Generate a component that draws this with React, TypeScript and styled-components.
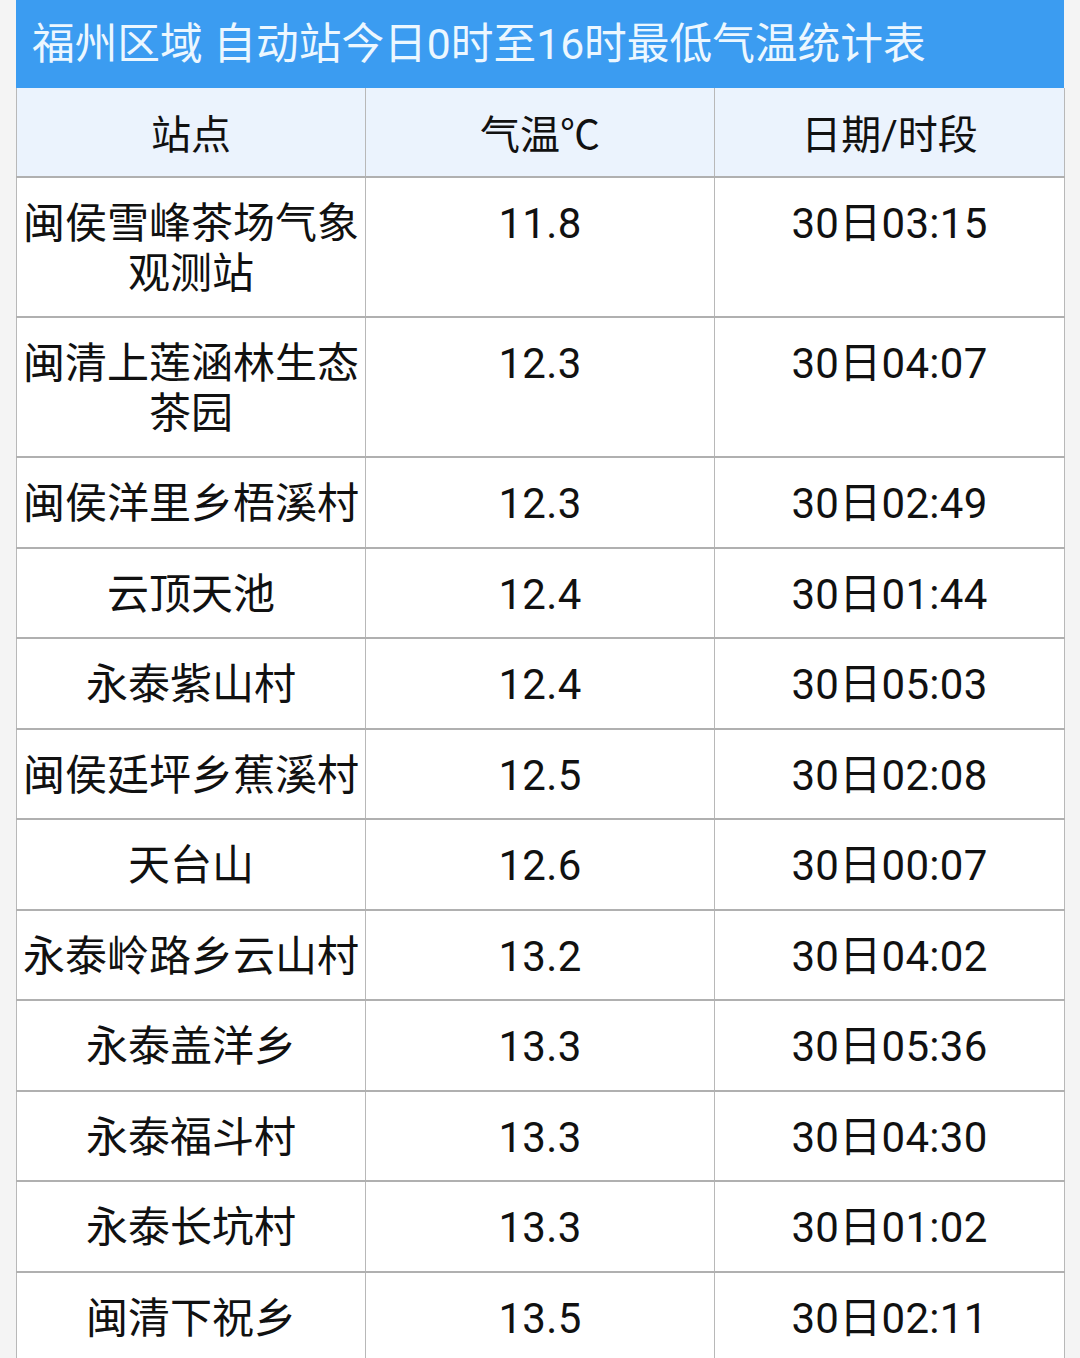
import styled, { createGlobalStyle } from 'styled-components'

const GlobalStyle = createGlobalStyle`
  html, body {
    margin: 0;
    padding: 0;
    background: #f4f4f4;
  }
  body {
    font-family: Roboto, "Noto Sans CJK SC", "Noto Sans", sans-serif;
  }
`

const Page = styled.div`
  width: 1080px;
  padding: 0 16px;
  box-sizing: border-box;
`

const Title = styled.div`
  height: 88px;
  background: #3b9cf1;
  color: #ecf7ff;
  font-size: 42.7px;
  line-height: 88px;
  padding-left: 16px;
  white-space: nowrap;
`

const Table = styled.table`
  width: 1048px;
  border-collapse: collapse;
  table-layout: fixed;
  background: #ffffff;
  color: #111111;
`

const HeadCell = styled.th`
  background: #ebf3fd;
  font-weight: normal;
  font-size: 40px;
  height: 88px;
  padding: 0;
  text-align: center;
  vertical-align: middle;
  border-left: 1px solid #b8b8b8;
  border-right: 1px solid #b8b8b8;
  border-bottom: 2px solid #b0b0b0;
`

const Cell = styled.td<{ $wide?: boolean }>`
  font-size: 42px;
  line-height: 49.5px;
  padding: 21px 2px 18px;
  text-align: center;
  vertical-align: top;
  border-left: 1px solid #b8b8b8;
  border-right: 1px solid #b8b8b8;
  border-bottom: 2px solid #b0b0b0;
  letter-spacing: ${p => (p.$wide ? '0' : '0.3px')};
`

type Row = { name: string; temp: string; time: string }

const rows: Row[] = [
  { name: '闽侯雪峰茶场气象观测站', temp: '11.8', time: '30日03:15' },
  { name: '闽清上莲涵林生态茶园', temp: '12.3', time: '30日04:07' },
  { name: '闽侯洋里乡梧溪村', temp: '12.3', time: '30日02:49' },
  { name: '云顶天池', temp: '12.4', time: '30日01:44' },
  { name: '永泰紫山村', temp: '12.4', time: '30日05:03' },
  { name: '闽侯廷坪乡蕉溪村', temp: '12.5', time: '30日02:08' },
  { name: '天台山', temp: '12.6', time: '30日00:07' },
  { name: '永泰岭路乡云山村', temp: '13.2', time: '30日04:02' },
  { name: '永泰盖洋乡', temp: '13.3', time: '30日05:36' },
  { name: '永泰福斗村', temp: '13.3', time: '30日04:30' },
  { name: '永泰长坑村', temp: '13.3', time: '30日01:02' },
  { name: '闽清下祝乡', temp: '13.5', time: '30日02:11' },
]

export default function App() {
  return (
    <>
      <GlobalStyle />
      <Page>
        <Title>福州区域 自动站今日0时至16时最低气温统计表</Title>
        <Table>
          <colgroup>
            <col style={{ width: '349px' }} />
            <col style={{ width: '349px' }} />
            <col style={{ width: '350px' }} />
          </colgroup>
          <thead>
            <tr>
              <HeadCell>站点</HeadCell>
              <HeadCell>气温℃</HeadCell>
              <HeadCell>日期/时段</HeadCell>
            </tr>
          </thead>
          <tbody>
            {rows.map((r, i) => (
              <tr key={i}>
                <Cell $wide>{r.name}</Cell>
                <Cell>{r.temp}</Cell>
                <Cell>{r.time}</Cell>
              </tr>
            ))}
          </tbody>
        </Table>
      </Page>
    </>
  )
}
